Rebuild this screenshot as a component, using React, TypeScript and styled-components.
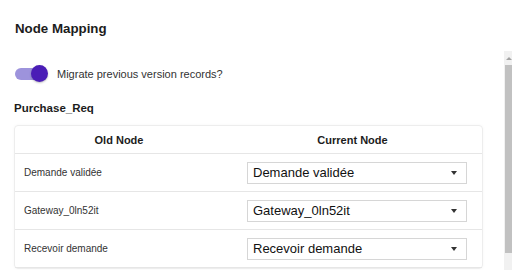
import { Fragment } from "react";
import styled, { createGlobalStyle } from "styled-components";

const GlobalStyle = createGlobalStyle`
  html, body {
    margin: 0;
    padding: 0;
    background: #fff;
    font-family: "Liberation Sans", Arial, sans-serif;
    color: #222;
  }
`;

const Page = styled.div`
  width: 512px;
  height: 270px;
  overflow: hidden;
  display: flex;
  flex-direction: column;
`;

const Header = styled.div`
  height: 51px;
  display: flex;
  align-items: center;
  padding: 5px 15px 0 15px;
  box-sizing: border-box;
`;

const Title = styled.h2`
  margin: 0;
  font-size: 13.3px;
  font-weight: 700;
  color: #1c1c1c;
`;

const Body = styled.div`
  flex: 1;
  display: flex;
  min-height: 0;
`;

const Content = styled.div`
  flex: 1;
  padding: 13px 21px 0 14px;
  display: flex;
  flex-direction: column;
`;

const ToggleRow = styled.label`
  display: flex;
  align-items: center;
  gap: 9px;
  height: 20px;
`;

const Switch = styled.span`
  position: relative;
  width: 33px;
  height: 18px;
  display: inline-flex;
  align-items: center;
  padding-left: 1px;

  &::before {
    content: "";
    width: 29px;
    height: 12px;
    border-radius: 6px;
    background: #9d93dc;
  }

  &::after {
    content: "";
    position: absolute;
    right: 0;
    top: 0;
    width: 17px;
    height: 17px;
    border-radius: 50%;
    background: #4a1db6;
    box-shadow: 0 1px 2px rgba(0, 0, 0, 0.25);
  }
`;

const ToggleLabel = styled.span`
  font-size: 11px;
  color: #333;
`;

const Section = styled.h3`
  margin: 17px 0 0 0;
  font-size: 11.5px;
  font-weight: 700;
  color: #1c1c1c;
  line-height: 14px;
`;

const Card = styled.div`
  margin-top: 10px;
  border: 1px solid #ededed;
  border-radius: 4px;
  box-shadow: 0 0 3px rgba(0, 0, 0, 0.04);
  display: grid;
  grid-template-columns: 208px 1fr;
`;

const HeadCell = styled.div`
  height: 27px;
  display: flex;
  align-items: center;
  justify-content: center;
  font-size: 11px;
  font-weight: 700;
  color: #1c1c1c;
  border-bottom: 1px solid #e6e6e6;
`;

const Cell = styled.div<{ $select?: boolean }>`
  height: 37px;
  display: flex;
  align-items: center;
  padding: ${(p) => (p.$select ? "0 15px 0 24px" : "0 0 0 9px")};
  font-size: 10px;
  color: #333;
  border-bottom: 1px solid #e6e6e6;
`;

const Select = styled.div`
  flex: 1;
  height: 22px;
  box-sizing: border-box;
  border: 1px solid #d6d6d6;
  display: flex;
  align-items: center;
  justify-content: space-between;
  padding: 0 9px 0 5px;
  font-size: 13px;
  color: #111;
  background: #fff;
`;

const Caret = styled.span`
  width: 0;
  height: 0;
  border-left: 3.5px solid transparent;
  border-right: 3.5px solid transparent;
  border-top: 4px solid #333;
`;

const ScrollTrack = styled.div`
  width: 8px;
  background: #f1f1f1;
  display: flex;
  flex-direction: column;
  align-items: flex-end;
`;

const ScrollArrow = styled.div`
  height: 14px;
  width: 7px;
  display: flex;
  align-items: center;
  justify-content: center;

  &::before {
    content: "";
    border-left: 3px solid transparent;
    border-right: 3px solid transparent;
    border-bottom: 3px solid #a3a3a3;
  }
`;

const ScrollThumb = styled.div`
  width: 7px;
  height: 188px;
  background: #c1c1c1;
`;

const rows = ["Demande validée", "Gateway_0ln52it", "Recevoir demande"];

export default function App() {
  return (
    <Page>
      <GlobalStyle />
      <Header>
        <Title>Node Mapping</Title>
      </Header>
      <Body>
        <Content>
          <ToggleRow>
            <Switch />
            <ToggleLabel>Migrate previous version records?</ToggleLabel>
          </ToggleRow>
          <Section>Purchase_Req</Section>
          <Card>
            <HeadCell>Old Node</HeadCell>
            <HeadCell>Current Node</HeadCell>
            {rows.map((r) => (
              <Fragment key={r}>
                <Cell>{r}</Cell>
                <Cell $select>
                  <Select>
                    {r}
                    <Caret />
                  </Select>
                </Cell>
              </Fragment>
            ))}
          </Card>
        </Content>
        <ScrollTrack>
          <ScrollArrow />
          <ScrollThumb />
        </ScrollTrack>
      </Body>
    </Page>
  );
}
